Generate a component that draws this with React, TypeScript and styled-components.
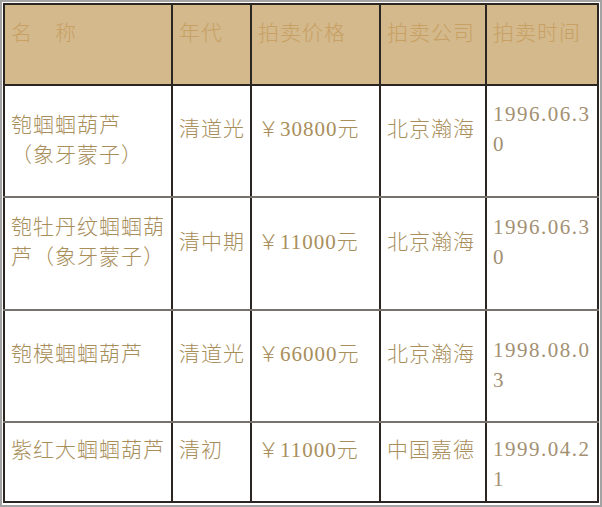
import React from 'react';
import styled, { createGlobalStyle } from 'styled-components';

type Pad = { top: number; bottom: number };

type Row = {
  name: string[];
  era: string;
  price: string;
  house: string;
  date: string;
  height: number;
  namePad?: Pad;
  datePad?: Pad;
};

const rows: Row[] = [
  { name: ['匏蝈蝈葫芦', '（象牙蒙子）'], era: '清道光', price: '￥30800元', house: '北京瀚海', date: '1996.06.30', height: 112, namePad: { top: 22, bottom: 24 } },
  { name: ['匏牡丹纹蝈蝈葫', '芦（象牙蒙子）'], era: '清中期', price: '￥11000元', house: '北京瀚海', date: '1996.06.30', height: 113 },
  { name: ['匏模蝈蝈葫芦'], era: '清道光', price: '￥66000元', house: '北京瀚海', date: '1998.08.03', height: 112, datePad: { top: 22, bottom: 24 } },
  { name: ['紫红大蝈蝈葫芦'], era: '清初', price: '￥11000元', house: '中国嘉德', date: '1999.04.21', height: 80, datePad: { top: 4, bottom: 0 } },
];

const headers = ['名　称', '年代', '拍卖价格', '拍卖公司', '拍卖时间'];
const widths = [168, 79, 129, 106, 112];

const GlobalStyle = createGlobalStyle`
  html, body {
    margin: 0;
    padding: 0;
    background: #ffffff;
  }
`;

const Frame = styled.div`
  box-sizing: border-box;
  width: 602px;
  height: 507px;
  border: 2px solid #a3a3a3;
  padding: 1px;
  background: #ffffff;
  overflow: hidden;
`;

const Grid = styled.table`
  width: 596px;
  table-layout: fixed;
  border-collapse: collapse;
  border: 2px solid #2b2622;
  font-family: 'Liberation Serif', 'Noto Sans CJK SC', serif;
  font-size: 21px;
  font-weight: 300;
  line-height: 30px;
`;

const HeadRow = styled.tr`
  height: 81px;
  background: #d3b98c;
`;

const HeadCell = styled.th`
  box-sizing: border-box;
  padding: 13px 6px 0;
  vertical-align: top;
  text-align: left;
  font-weight: 300;
  color: #c8a063;
  letter-spacing: 1px;
  border: 2px solid #2b2622;
  white-space: nowrap;
`;

const BodyRow = styled.tr<{ $h: number }>`
  height: ${(p) => p.$h}px;
`;

const Cell = styled.td<{ $pad?: Pad }>`
  box-sizing: border-box;
  padding: ${(p) => p.$pad?.top ?? 0}px 6px ${(p) => p.$pad?.bottom ?? 24}px;
  vertical-align: middle;
  color: #a88e5b;
  letter-spacing: 1px;
  border-left: 2px solid #2b2622;
  border-right: 2px solid #2b2622;
  border-bottom: 2px solid #77726c;
  white-space: nowrap;

  tr:last-child > & {
    border-bottom: 2px solid #2b2622;
  }
`;

const DateCell = styled(Cell)`
  white-space: normal;
  word-break: break-all;
  letter-spacing: 1.5px;
  color: #a39072;
`;

export default function App() {
  return (
    <>
      <GlobalStyle />
      <Frame>
        <Grid>
          <colgroup>
            {widths.map((w, i) => (
              <col key={i} style={{ width: w }} />
            ))}
          </colgroup>
          <thead>
            <HeadRow>
              {headers.map((h) => (
                <HeadCell key={h}>{h}</HeadCell>
              ))}
            </HeadRow>
          </thead>
          <tbody>
            {rows.map((r, i) => (
              <BodyRow key={i} $h={r.height}>
                <Cell $pad={r.namePad}>
                  {r.name.map((line, j) => (
                    <React.Fragment key={j}>
                      {j > 0 && <br />}
                      {line}
                    </React.Fragment>
                  ))}
                </Cell>
                <Cell>{r.era}</Cell>
                <Cell>{r.price}</Cell>
                <Cell>{r.house}</Cell>
                <DateCell $pad={r.datePad}>{r.date}</DateCell>
              </BodyRow>
            ))}
          </tbody>
        </Grid>
      </Frame>
    </>
  );
}
